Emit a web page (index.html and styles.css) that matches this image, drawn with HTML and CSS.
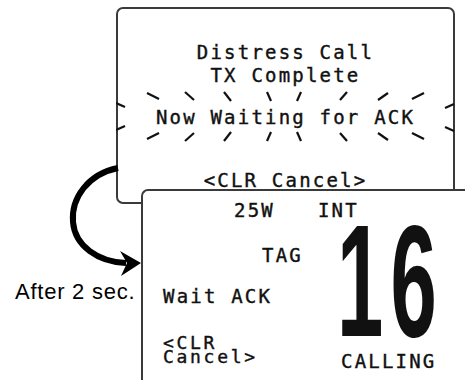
FILE: index.html
```html
<!DOCTYPE html>
<html>
<head>
<meta charset="utf-8">
<link rel="stylesheet" href="styles.css">
</head>
<body>
<div class="canvas">
  <section class="lcd lcd-first">
    <svg class="burst" viewBox="116 7 339 197" width="339" height="197" aria-hidden="true">
      <g stroke="#111" stroke-width="2.2" stroke-linecap="butt">
        <line x1="147" y1="93" x2="159" y2="99"/>
        <line x1="185" y1="92" x2="194" y2="100"/>
        <line x1="224" y1="92" x2="231" y2="101"/>
        <line x1="267" y1="92" x2="271" y2="101"/>
        <line x1="301" y1="92" x2="297" y2="101"/>
        <line x1="347" y1="92" x2="340" y2="100"/>
        <line x1="388" y1="93" x2="378" y2="100"/>
        <line x1="424" y1="93" x2="412" y2="99"/>
        <line x1="147" y1="139" x2="159" y2="133"/>
        <line x1="185" y1="141" x2="194" y2="133"/>
        <line x1="224" y1="141" x2="231" y2="132"/>
        <line x1="267" y1="141" x2="271" y2="132"/>
        <line x1="301" y1="141" x2="297" y2="132"/>
        <line x1="347" y1="141" x2="340" y2="133"/>
        <line x1="388" y1="140" x2="378" y2="133"/>
        <line x1="424" y1="139" x2="412" y2="133"/>
        <line x1="116" y1="103" x2="125" y2="107"/>
        <line x1="116" y1="130" x2="125" y2="126"/>
        <line x1="445" y1="108" x2="454" y2="104"/>
        <line x1="445" y1="127" x2="454" y2="131"/>
      </g>
    </svg>
    <div class="line">Distress Call</div>
    <div class="line">TX Complete</div>
    <div class="line line-wait">Now Waiting for ACK</div>
    <div class="line line-clr">&lt;CLR Cancel&gt;</div>
  </section>

  <section class="lcd lcd-second">
    <div class="status-row">
      <span class="power">25W</span>
      <span class="mode">INT</span>
    </div>
    <div class="body-row">
      <div class="left-col">
        <div class="line tag">TAG</div>
        <div class="line wait">Wait ACK</div>
        <div class="clr">
          <div class="clr-line">&lt;CLR</div>
          <div class="clr-line">Cancel&gt;</div>
        </div>
      </div>
      <div class="right-col">
        <div class="channel"><span class="channel-num">16</span></div>
        <div class="line calling">CALLING</div>
      </div>
    </div>
  </section>

  <svg class="arrow" viewBox="60 160 90 125" width="90" height="125" aria-hidden="true">
    <path d="M118,168 C88,174 71,198 73,222 C75,246 98,262 126,263" fill="none" stroke="#000" stroke-width="6"/>
    <polygon points="141,263 120,251 127,263 121,276" fill="#000"/>
  </svg>

  <div class="caption">After 2 sec.</div>
</div>
</body>
</html>
```

FILE: styles.css
```css
html, body {
  margin: 0;
  padding: 0;
  background: #fff;
}

.canvas {
  position: relative;
  width: 465px;
  height: 380px;
  overflow: hidden;
  font-family: "DejaVu Sans Mono", "Liberation Mono", monospace;
  color: #111;
}

.lcd {
  box-sizing: border-box;
  background: #fff;
  border: 2px solid #3a3a3a;
  -webkit-text-stroke: 0.4px #111;
}

.line {
  font-size: 19px;
  line-height: 23px;
  letter-spacing: 2.2px;
  white-space: nowrap;
}

.lcd-first {
  position: relative;
  margin: 7px 0 0 116px;
  width: 339px;
  height: 197px;
  border-radius: 7px;
  padding-top: 32px;
  text-align: center;
}

.burst {
  position: absolute;
  left: -2px;
  top: -2px;
}

.line-wait {
  margin-top: 19px;
}

.line-clr {
  margin-top: 40px;
}

.lcd-second {
  position: absolute;
  left: 141px;
  top: 189px;
  width: 340px;
  height: 210px;
  border-right: none;
  border-bottom: none;
  border-radius: 7px 0 0 0;
  padding: 8px 0 0 20px;
}

.status-row {
  display: flex;
  gap: 43px;
  padding-left: 71px;
  font-size: 19px;
  line-height: 23px;
  letter-spacing: 2.2px;
}

.body-row {
  display: flex;
}

.left-col {
  width: 176px;
}

.tag {
  margin: 22px 0 0 99px;
}

.wait {
  margin-top: 18px;
}

.clr {
  margin-top: 28px;
}

.clr-line {
  font-size: 18px;
  line-height: 14px;
  height: 14px;
  letter-spacing: 2.7px;
  white-space: nowrap;
}

.right-col {
  display: flex;
  flex-direction: column;
}

.channel {
  width: 100px;
  height: 120px;
  font-family: "Liberation Sans", Arial, sans-serif;
  font-weight: bold;
  font-size: 80px;
  line-height: 60px;
  letter-spacing: 7px;
  -webkit-text-stroke: 0;
}

.channel-num {
  display: inline-block;
  margin-left: -2px;
  transform: scale(1.04, 2);
  transform-origin: 0 0;
}

.calling {
  margin: 8px 0 0 2px;
}

.arrow {
  position: absolute;
  left: 60px;
  top: 160px;
}

.caption {
  position: absolute;
  left: 15px;
  top: 280px;
  font-family: "Liberation Sans", Arial, sans-serif;
  font-size: 22px;
  line-height: 24px;
  letter-spacing: 0.75px;
  color: #000;
  white-space: nowrap;
}
```
